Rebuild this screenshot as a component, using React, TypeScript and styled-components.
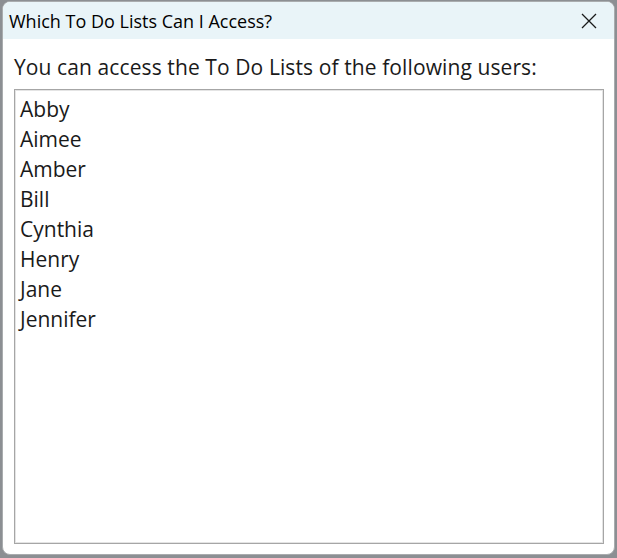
import React from "react";
import styled, { createGlobalStyle } from "styled-components";

const Global = createGlobalStyle`
  html, body { margin: 0; padding: 0; }
  body {
    width: 617px;
    height: 558px;
    overflow: hidden;
    background: #8c8f93;
    font-family: "Open Sans", "Noto Sans", sans-serif;
  }
`;

const Desktop = styled.div`
  width: 617px;
  height: 558px;
  padding: 1px 2px 3px 2px;
  box-sizing: border-box;
  display: flex;
`;

const Window = styled.div`
  flex: 1;
  display: flex;
  flex-direction: column;
  background: #ffffff;
  border: 1px solid #a9acae;
  border-radius: 8px;
  overflow: hidden;
`;

const TitleBar = styled.div`
  height: 37px;
  flex: none;
  display: flex;
  align-items: center;
  justify-content: space-between;
  background: #e9f4f8;
  padding: 0 0 0 6px;
`;

const Title = styled.span`
  font-size: 18px;
  color: #000;
`;

const CloseButton = styled.button`
  width: 46px;
  height: 37px;
  border: none;
  background: transparent;
  display: flex;
  align-items: center;
  justify-content: center;
  padding: 0;
  margin-right: 2px;
`;

const Body = styled.div`
  flex: 1;
  display: flex;
  flex-direction: column;
  padding: 15px 10px 10px 11px;
  gap: 9px;
`;

const Label = styled.div`
  font-size: 21px;
  color: #1a1a1a;
  line-height: 26px;
  letter-spacing: 0.1px;
`;

const ListBox = styled.ul`
  flex: 1;
  margin: 0;
  padding: 4px 0 0 5px;
  list-style: none;
  border: 1px solid #a6a6a6;
  box-shadow: inset 0 0 0 1px #e4e4e4;
`;

const Item = styled.li`
  font-size: 21px;
  line-height: 30px;
  color: #1a1a1a;
`;

const users = ["Abby", "Aimee", "Amber", "Bill", "Cynthia", "Henry", "Jane", "Jennifer"];

export default function App() {
  return (
    <>
      <Global />
      <Desktop>
        <Window>
          <TitleBar>
            <Title>Which To Do Lists Can I Access?</Title>
            <CloseButton aria-label="Close">
              <svg width="16" height="16" viewBox="0 0 16 16">
                <path d="M1 1 L15 15 M15 1 L1 15" stroke="#1a1a1a" strokeWidth="1.3" fill="none" />
              </svg>
            </CloseButton>
          </TitleBar>
          <Body>
            <Label>You can access the To Do Lists of the following users:</Label>
            <ListBox>
              {users.map((u) => (
                <Item key={u}>{u}</Item>
              ))}
            </ListBox>
          </Body>
        </Window>
      </Desktop>
    </>
  );
}
